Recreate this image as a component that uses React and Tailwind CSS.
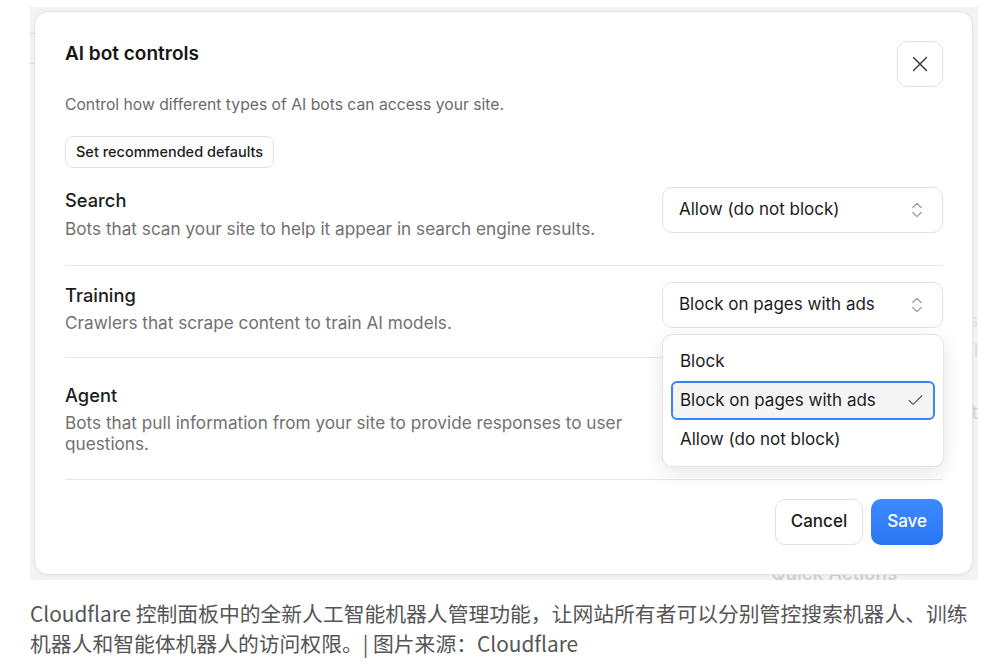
import React from "react";

function ChevronsUpDown({ className }) {
  return (
    <svg className={className} viewBox="0 0 24 24" fill="none" stroke="currentColor" strokeWidth="1.5" strokeLinecap="round" strokeLinejoin="round">
      <path d="m7 15 5 5 5-5" />
      <path d="m7 9 5-5 5 5" />
    </svg>
  );
}

function XIcon({ className }) {
  return (
    <svg className={className} viewBox="0 0 24 24" fill="none" stroke="currentColor" strokeWidth="1.3" strokeLinecap="round" strokeLinejoin="round">
      <path d="M18 6 6 18" />
      <path d="m6 6 12 12" />
    </svg>
  );
}

function CheckIcon({ className }) {
  return (
    <svg className={className} viewBox="0 0 24 24" fill="none" stroke="currentColor" strokeWidth="1.4" strokeLinecap="round" strokeLinejoin="round">
      <path d="M20 6 9 17l-5-5" />
    </svg>
  );
}

function Select({ value, children }) {
  return (
    <div className="relative w-[281px] shrink-0">
      <div className="h-[46px] rounded-[10px] border border-[#e2e2e2] bg-white flex items-center justify-between pl-[16px] pr-[15px] text-[17px] text-[#1c1c1c]">
        <span>{value}</span>
        <ChevronsUpDown className="w-[20px] h-[20px] text-[#9a9a9a]" />
      </div>
      {children}
    </div>
  );
}

export default function App() {
  const ui = { fontFamily: "Inter, 'Noto Sans', sans-serif" };
  return (
    <div className="w-[1007px] h-[668px] bg-white overflow-hidden">
      <div className="ml-[30px] mt-[7px] w-[948px] h-[573px] bg-[#f3f3f3] relative overflow-hidden pl-[4px] pt-[4px]" style={ui}>
        <div className="absolute left-0 top-[26px] w-[5px] h-px bg-[#c9d6f2]" />
        <div className="absolute left-0 top-[56px] w-[5px] h-px bg-[#c9d6f2]" />
        <div className="absolute left-[741px] top-[553px] text-[19px] font-medium text-[#cfcfcf] whitespace-nowrap">Quick Actions</div>
        <div className="absolute right-0 top-[300px] text-[18px] text-[#dcdcdc]">s</div>
        <div className="absolute right-0 top-[330px] text-[18px] text-[#dcdcdc]">l</div>
        <div className="absolute right-0 top-[392px] text-[19px] text-[#d0d0d0]">t</div>
        <div className="relative w-[939px] h-[564px] rounded-[14px] border border-[#e3e3e3] bg-white shadow-[0_1px_3px_rgba(0,0,0,0.04)] pl-[30px] pr-[29px] pt-[29px] flex flex-col">
          <div className="flex justify-between items-start">
            <div className="flex flex-col items-start">
              <h1 className="text-[19px] leading-[26px] font-semibold text-[#161616]">AI bot controls</h1>
              <p className="mt-[27px] text-[15.7px] leading-[22px] text-[#6b6b6b]">Control how different types of AI bots can access your site.</p>
              <button className="mt-[20px] h-[32px] px-[10px] rounded-[8px] border border-[#e2e2e2] bg-white text-[14.5px] font-medium text-[#1c1c1c]">Set recommended defaults</button>
            </div>
            <button className="w-[46px] h-[46px] rounded-[10px] border border-[#e2e2e2] bg-white flex items-center justify-center text-[#333]">
              <XIcon className="w-[26px] h-[26px]" />
            </button>
          </div>

          <div className="flex justify-between items-start gap-8 pt-[19px] pb-[25px] border-b border-[#e8e8e8]">
            <div className="pt-[1px]">
              <div className="text-[18.3px] leading-[24px] font-medium text-[#1c1c1c]">Search</div>
              <div className="mt-[6px] text-[17.2px] leading-[22px] text-[#717171]">Bots that scan your site to help it appear in search engine results.</div>
            </div>
            <Select value="Allow (do not block)" />
          </div>

          <div className="flex justify-between items-start gap-8 pt-[16px] pb-[23px] border-b border-[#e8e8e8] relative z-10">
            <div className="pt-[1px]">
              <div className="text-[18.3px] leading-[24px] font-medium text-[#1c1c1c]">Training</div>
              <div className="mt-[5px] text-[17.2px] leading-[22px] text-[#717171]">Crawlers that scrape content to train AI models.</div>
            </div>
            <Select value="Block on pages with ads">
              <div className="absolute left-0 top-[52px] w-[282px] rounded-[10px] border border-[#e4e4e4] bg-white shadow-[0_6px_20px_rgba(0,0,0,0.10)] pt-[7px] pb-[7px] px-[8px] text-[17px] text-[#1c1c1c]">
                <div className="h-[39px] flex items-center px-[9px]">Block</div>
                <div className="h-[39px] flex items-center justify-between pl-[7px] pr-[8px] rounded-[6px] border-2 border-[#3b82f6] bg-[#f4f4f5]">
                  <span>Block on pages with ads</span>
                  <CheckIcon className="w-[19px] h-[19px] text-[#555]" />
                </div>
                <div className="h-[39px] flex items-center px-[9px]">Allow (do not block)</div>
              </div>
            </Select>
          </div>

          <div className="flex justify-between items-start gap-8 pt-[25px] pb-[25px] border-b border-[#e8e8e8]">
            <div className="max-w-[572px]">
              <div className="text-[18.3px] leading-[24px] font-medium text-[#1c1c1c]">Agent</div>
              <div className="mt-[5px] text-[17.2px] leading-[21px] text-[#717171]">Bots that pull information from your site to provide responses to user questions.</div>
            </div>
            <Select value="Block" />
          </div>

          <div className="flex justify-end gap-[8px] pt-[19px]">
            <button className="h-[46px] px-[15px] rounded-[10px] border border-[#e2e2e2] bg-white text-[17px] font-medium text-[#1c1c1c]">Cancel</button>
            <button className="h-[46px] px-[16px] rounded-[10px] bg-gradient-to-b from-[#3d8bff] to-[#2a74f2] text-[17px] font-medium text-white">Save</button>
          </div>
        </div>
      </div>
      <p className="ml-[30px] mt-[18px] w-[950px] text-[20.8px] leading-[30px] text-[#555555]" style={{ fontFamily: "'Noto Sans CJK SC', 'Noto Sans', sans-serif" }}>
        Cloudflare 控制面板中的全新人工智能机器人管理功能，让网站所有者可以分别管控搜索机器人、训练机器人和智能体机器人的访问权限。| 图片来源：Cloudflare
      </p>
    </div>
  );
}
